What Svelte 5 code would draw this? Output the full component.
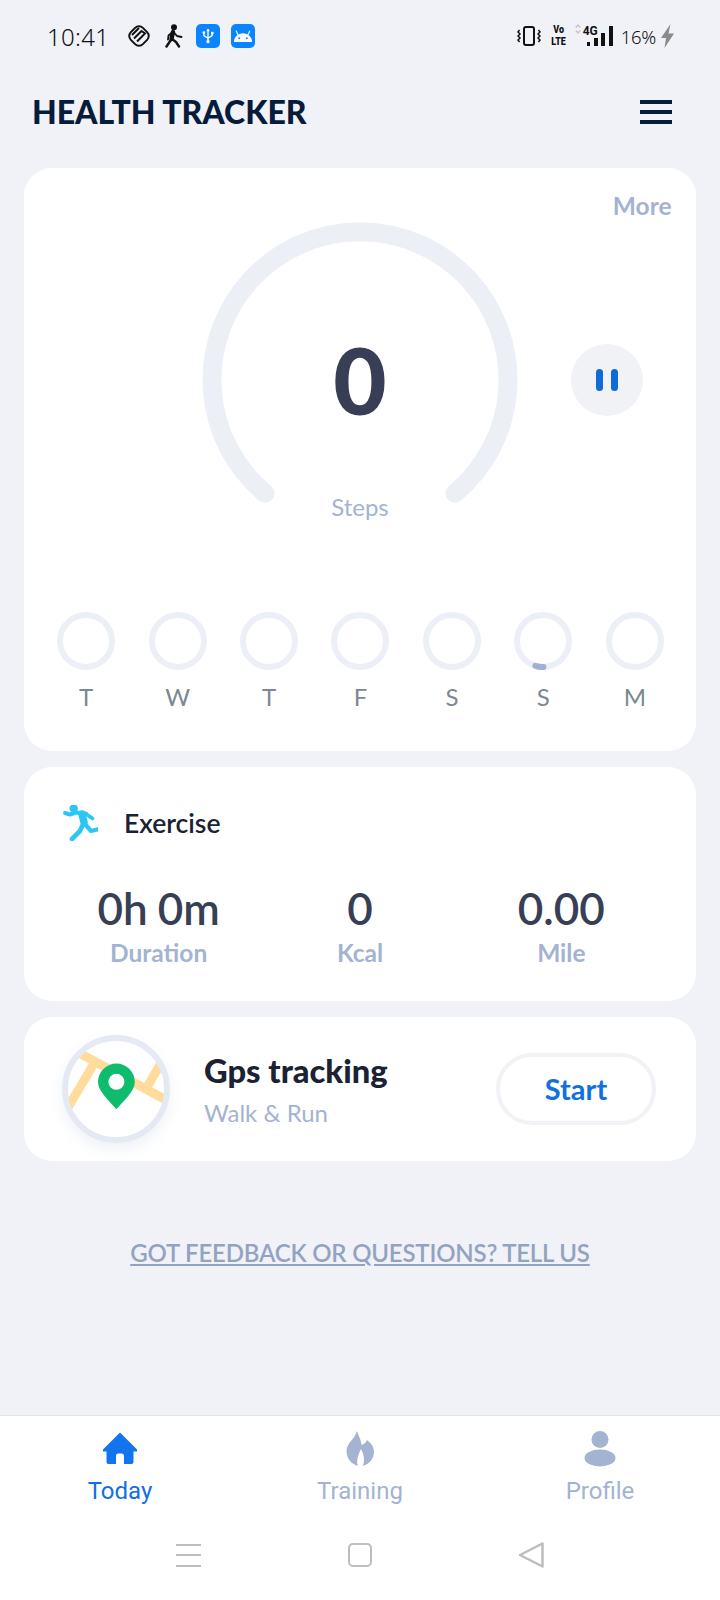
<script>
    const days = [
        {label: "T"},
        {label: "W"},
        {label: "T"},
        {label: "F"},
        {label: "S"},
        {label: "S", progress: true},
        {label: "M"}
    ];

    const stats = [
        {value: "0h 0m", label: "Duration"},
        {value: "0", label: "Kcal"},
        {value: "0.00", label: "Mile"}
    ];
</script>

<div class="page">
    <div class="status">
        <span class="time">10:41</span>
        <div class="status-left">
            <svg width="24" height="24" viewBox="0 0 24 24" fill="none" stroke="#111" stroke-width="2">
                <rect x="3.500" y="3.500" width="17" height="17" rx="5.500" transform="rotate(45 12 12)" />
                <path d="M5 11L12 4M7 14.500L15 6.500M10 17.500L14 13.500L18 9.500L14.500 7" />
            </svg>
            <svg class="walker" width="18" height="24" viewBox="0 0 18 24" fill="none" stroke="#111" stroke-linecap="round" stroke-linejoin="round">
                <circle cx="9" cy="3.200" r="3" fill="#111" stroke="none" />
                <path d="M8 8L6.500 15" stroke-width="4.400" />
                <path d="M6.500 15L1.500 22.500M7 15L11 18L14 22.500" stroke-width="2.400" />
                <path d="M9 8.500L12 12L16.500 13M6.500 9L3.500 11.500L3 15.500" stroke-width="1.800" />
            </svg>
            <div class="tile">
                <svg width="12" height="16" viewBox="0 0 16 20" fill="none" stroke="#fff" stroke-width="1.800">
                    <path d="M8 1V18M2.500 6.500V9.500L8 13L13.500 9.500V7" />
                    <path d="M8 0L10.500 3.500H5.500Z" fill="#fff" stroke="none" />
                    <circle cx="8" cy="17.500" r="2.200" fill="#fff" stroke="none" />
                    <circle cx="2.500" cy="5.500" r="1.900" fill="#fff" stroke="none" />
                    <rect x="12" y="4.500" width="3.400" height="3.400" fill="#fff" stroke="none" />
                </svg>
            </div>
            <div class="tile">
                <svg width="18" height="13" viewBox="0 0 20 14">
                    <path d="M0 13C0 7.500 4.500 3.500 10 3.500C15.500 3.500 20 7.500 20 13Z" fill="#fff" />
                    <path d="M4.500 5L2.500 1M15.500 5L17.500 1" stroke="#fff" stroke-width="1.300" stroke-linecap="round" />
                    <circle cx="5.800" cy="9" r="1.100" fill="#0a84ff" />
                    <circle cx="14.200" cy="9" r="1.100" fill="#0a84ff" />
                </svg>
            </div>
        </div>
        <div class="status-right">
            <svg width="24" height="20" viewBox="0 0 24 20" fill="none" stroke="#111">
                <rect x="7" y="1" width="10" height="18" rx="2" stroke-width="2" />
                <path d="M2.500 4L1 6L3 8L1 10L3 12L1 14L2.500 16M21.500 4L23 6L21 8L23 10L21 12L23 14L21.500 16" stroke-width="1.500" />
            </svg>
            <div class="volte"><span>Vo</span><span>LTE</span></div>
            <svg class="arrows" width="6" height="10" viewBox="0 0 6 10" fill="none" stroke="#c4c4c4" stroke-width="1.300">
                <path d="M0.800 3.500L3 1L5.200 3.500M0.800 6.500L3 9L5.200 6.500" />
            </svg>
            <div class="signal">
                <div class="net">
                    <span>4G</span>
                    <div class="small-bars"><i></i><i></i></div>
                </div>
                <i class="bar-mid"></i>
                <i class="bar-tall"></i>
            </div>
            <span class="battery">16%</span>
            <svg class="bolt" width="13" height="24" viewBox="0 0 13 24">
                <path d="M9.500 0L0 14H5L3.500 24L13 9.500H7.500Z" fill="#8a8a8a" />
            </svg>
        </div>
    </div>

    <header class="header">
        <h1>HEALTH TRACKER</h1>
        <div class="menu"><i></i><i></i><i></i></div>
    </header>

    <main class="main">
        <section class="card steps-card">
            <div class="more">More</div>
            <div class="gauge-row">
                <div class="gauge">
                    <svg width="316" height="300" viewBox="0 0 316 300" fill="none">
                        <path d="M63 271.300A148 148 0 1 1 253 271.300" stroke="#ecf0f6" stroke-width="19" stroke-linecap="round" />
                    </svg>
                    <div class="count">0</div>
                    <div class="steps-label">Steps</div>
                </div>
                <button class="pause" aria-label="Pause"><i></i><i></i></button>
            </div>
            <div class="week">
                {#each days as day}
                    <div class="day">
                        <svg width="58" height="58" viewBox="0 0 58 58" fill="none">
                            <circle cx="29" cy="29" r="26" stroke="#ecf0f6" stroke-width="6" />
                            {#if day.progress}
                                <path d="M21.400 53.900A26 26 0 0 0 29.400 55" stroke="#9fb0d0" stroke-width="6" stroke-linecap="round" />
                            {/if}
                        </svg>
                        <span>{day.label}</span>
                    </div>
                {/each}
            </div>
        </section>

        <section class="card exercise-card">
            <div class="exercise-head">
                <svg width="36" height="36" viewBox="11 15 36 36" fill="none" stroke="#2cc5f4" stroke-linecap="round" stroke-linejoin="round">
                    <circle cx="22.700" cy="18.500" r="4.200" fill="#2cc5f4" stroke="none" />
                    <path d="M14 23L19 24.500L25 22.500L35 23.500" stroke-width="4" />
                    <path d="M31 24L33 32" stroke-width="7.500" />
                    <path d="M33 32L29 41L21 49" stroke-width="4.600" />
                    <path d="M33 33L40 41L46 39.500" stroke-width="4.200" />
                    <path d="M35 24L41.500 28.500" stroke-width="3.800" />
                </svg>
                <span>Exercise</span>
            </div>
            <div class="stats">
                {#each stats as stat}
                    <div class="stat">
                        <div class="stat-value">{stat.value}</div>
                        <div class="stat-label">{stat.label}</div>
                    </div>
                {/each}
            </div>
        </section>

        <section class="card gps-card">
            <div class="map">
                <svg width="108" height="108" viewBox="0 0 108 108" fill="none">
                    <defs>
                        <clipPath id="mapClip"><circle cx="54" cy="54" r="49" /></clipPath>
                    </defs>
                    <g clip-path="url(#mapClip)" stroke="#ffdc9c" stroke-width="9">
                        <path d="M8 13L104 65" />
                        <path d="M33 27L5 74" />
                        <path d="M99 28L84 54" />
                    </g>
                    <circle cx="54" cy="54" r="51" stroke="#e4e9f3" stroke-width="6" />
                    <path d="M54.400 74.300C48 66 36 57 36 47A18.400 18.400 0 0 1 72.800 47C72.800 57 61 66 54.400 74.300Z" fill="#0fbb6c" />
                    <circle cx="54.400" cy="46.800" r="8" fill="#fff" />
                </svg>
            </div>
            <div class="gps-text">
                <div class="gps-title">Gps tracking</div>
                <div class="gps-sub">Walk &amp; Run</div>
            </div>
            <button class="start">Start</button>
        </section>

        <div class="feedback">GOT FEEDBACK OR QUESTIONS? TELL US</div>
    </main>

    <nav class="tabs">
        <div class="tab active">
            <svg width="36" height="36" viewBox="0 0 36 36">
                <path d="M18 1.500L35 18.500V20.500H31.500V31C31.500 32.200 30.700 33 29.500 33H22V25C22 23.500 21 22.500 19.800 22.500H16.200C15 22.500 14 23.500 14 25V33H6.500C5.300 33 4.500 32.200 4.500 31V20.500H1V18.500Z" fill="#1275ee" />
            </svg>
            <span>Today</span>
        </div>
        <div class="tab">
            <svg width="36" height="36" viewBox="0 0 36 36">
                <path d="M15 0C16.500 5 19 8 19.500 14C21 13.500 24 12 25 9C29 12 32 16 32 21C32 28 27 33 21 35C23 29 22 24 19 18C16 24 14 30 16 35C9 33 4.500 27 4.500 20C4.500 12 13 8 15 0Z" fill="#a3b3d1" />
            </svg>
            <span>Training</span>
        </div>
        <div class="tab">
            <svg width="36" height="36" viewBox="0 0 36 36" fill="#a3b3d1">
                <ellipse cx="18" cy="8.500" rx="8.500" ry="8.500" />
                <ellipse cx="18" cy="27" rx="15.500" ry="8.500" />
            </svg>
            <span>Profile</span>
        </div>
    </nav>

    <div class="system-nav">
        <div class="sys-menu"><i></i><i></i><i></i></div>
        <div class="sys-home"></div>
        <svg width="27" height="28" viewBox="0 0 27 28" fill="none">
            <path d="M24.500 2.500V25.500L2 14Z" stroke="#bdbdbd" stroke-width="2.500" stroke-linejoin="round" />
        </svg>
    </div>
</div>

<style>
    :global(body) {
        background: #f0f2f7;
    }

    .page {
        width: 720px;
        height: 1600px;
        display: flex;
        flex-direction: column;
        font-family: Lato, sans-serif;
        background: #f0f2f7;
        overflow: hidden;
    }

    .status {
        height: 72px;
        box-sizing: border-box;
        padding: 0 46px 0 47px;
        display: flex;
        align-items: center;
    }

    .time {
        font-family: "Noto Sans", sans-serif;
        font-weight: 300;
        font-size: 24px;
        letter-spacing: 0.3px;
        color: #111;
        width: 80px;
    }

    .status-left {
        display: flex;
        align-items: center;
        margin-right: auto;
    }

    .walker {
        margin-left: 14px;
        margin-right: 13px;
    }

    .tile {
        width: 24px;
        height: 24px;
        border-radius: 5px;
        background: #0a84ff;
        display: flex;
        align-items: center;
        justify-content: center;
        margin-right: 11px;
    }

    .status-right {
        display: flex;
        align-items: center;
    }

    .volte {
        display: flex;
        flex-direction: column;
        align-items: center;
        font-family: Roboto, sans-serif;
        font-weight: 900;
        font-size: 10.500px;
        line-height: 12.400px;
        color: #111;
        margin-left: 9px;
        transform: scaleX(0.85);
    }

    .volte span {
        display: block;
    }

    .arrows {
        margin-left: 8px;
        margin-top: -14px;
    }

    .signal {
        display: flex;
        align-items: flex-end;
        margin-left: 2px;
        height: 20px;
    }

    .net {
        display: flex;
        flex-direction: column;
        align-items: center;
    }

    .net span {
        font-family: Roboto, sans-serif;
        font-weight: 700;
        font-size: 12px;
        line-height: 11px;
        color: #111;
    }

    .small-bars {
        display: flex;
        gap: 4px;
        align-items: flex-end;
        margin-left: 4px;
        height: 9px;
    }

    .small-bars i {
        display: block;
        width: 3.500px;
        height: 4px;
        background: #111;
    }

    .small-bars i + i {
        height: 8px;
    }

    .bar-mid,
    .bar-tall {
        display: block;
        width: 4px;
        background: #111;
        margin-left: 3px;
    }

    .bar-mid {
        height: 13px;
    }

    .bar-tall {
        height: 20px;
        margin-left: 4px;
    }

    .battery {
        font-family: "Noto Sans", sans-serif;
        font-weight: 300;
        font-size: 18.500px;
        letter-spacing: -0.300px;
        color: #111;
        margin-left: 8px;
    }

    .bolt {
        margin-left: 5px;
    }

    .header {
        display: flex;
        align-items: center;
        justify-content: space-between;
        padding: 0 48px 16px 32px;
        height: 96px;
        box-sizing: border-box;
    }

    h1 {
        margin: 0;
        font-size: 32px;
        line-height: 40px;
        font-weight: 900;
        color: #051d3a;
    }

    .menu {
        width: 32px;
        display: flex;
        flex-direction: column;
        gap: 6px;
    }

    .menu i {
        display: block;
        height: 4px;
        background: #051d3a;
    }

    .main {
        flex: 1;
        padding: 0 24px;
        display: flex;
        flex-direction: column;
        gap: 16px;
    }

    .card {
        background: #fff;
        border-radius: 28px;
    }

    .steps-card {
        padding: 23px 16px 39px;
    }

    .more {
        text-align: right;
        font-size: 24.500px;
        line-height: 30px;
        font-weight: 700;
        color: #a3b3d1;
        padding-right: 8.500px;
    }

    .gauge-row {
        display: grid;
        grid-template-columns: 1fr 316px 1fr;
        align-items: start;
        margin-top: 1px;
    }

    .gauge {
        grid-column: 2;
        position: relative;
        height: 300px;
    }

    .gauge svg {
        display: block;
    }

    .count {
        position: absolute;
        left: 0;
        right: 0;
        top: 100px;
        text-align: center;
        font-size: 92px;
        line-height: 116px;
        font-weight: 900;
        color: #373e55;
    }

    .steps-label {
        position: absolute;
        left: 0;
        right: 0;
        top: 270px;
        text-align: center;
        font-size: 24px;
        line-height: 30px;
        color: #a3b3d1;
    }

    .pause {
        grid-column: 3;
        justify-self: center;
        margin-top: 122px;
        margin-left: 16px;
        width: 72px;
        height: 72px;
        border: none;
        border-radius: 50%;
        background: #f0f2f6;
        display: flex;
        align-items: center;
        justify-content: center;
        gap: 8px;
        padding: 0;
    }

    .pause i {
        display: block;
        width: 7px;
        height: 22px;
        border-radius: 3.500px;
        background: #0f6bd8;
    }

    .week {
        display: grid;
        grid-template-columns: repeat(7, 1fr);
        margin-top: 90px;
        margin-left: 0.500px;
        margin-right: -0.500px;
    }

    .day {
        display: flex;
        flex-direction: column;
        align-items: center;
        gap: 12px;
        font-size: 24px;
        line-height: 30px;
        color: #7b8794;
    }

    .day svg {
        display: block;
    }

    .exercise-card {
        padding: 38px 34px 33px;
    }

    .exercise-head {
        display: flex;
        align-items: center;
        gap: 26px;
        margin-left: 4px;
        font-size: 26.500px;
        line-height: 30px;
        font-weight: 600;
        color: #1a2233;
    }

    .exercise-head svg {
        display: block;
    }

    .stats {
        display: grid;
        grid-template-columns: repeat(3, 1fr);
        margin-top: 42px;
        text-align: center;
    }

    .stat-value {
        font-size: 44px;
        line-height: 50px;
        font-weight: 600;
        word-spacing: -1px;
        color: #373e55;
    }

    .stat-label {
        margin-top: 5px;
        font-size: 24.500px;
        line-height: 30px;
        font-weight: 700;
        color: #a3b3d1;
    }

    .gps-card {
        height: 144px;
        box-sizing: border-box;
        padding: 0 40px 0 38px;
        display: flex;
        align-items: center;
    }

    .map {
        width: 108px;
        height: 108px;
        border-radius: 50%;
        box-shadow: 0 6px 14px rgba(160, 175, 210, 0.18);
    }

    .map svg {
        display: block;
    }

    .gps-text {
        margin-left: 34px;
        flex: 1;
    }

    .gps-title {
        font-size: 32.700px;
        line-height: 40px;
        font-weight: 900;
        color: #1a2233;
    }

    .gps-sub {
        margin-top: 7px;
        font-size: 24px;
        line-height: 30px;
        color: #a3b3d1;
    }

    .start {
        width: 160px;
        height: 72px;
        box-sizing: border-box;
        border: 4px solid #f0f2f6;
        border-radius: 36px;
        background: #fff;
        font-family: Lato, sans-serif;
        font-size: 29px;
        font-weight: 700;
        color: #1170e0;
        padding: 0 0 2px;
    }

    .feedback {
        margin-top: 61px;
        text-align: center;
        font-size: 24px;
        line-height: 30px;
        font-weight: 600;
        letter-spacing: -0.200px;
        color: #92a3c1;
        text-decoration: underline;
    }

    .tabs {
        display: grid;
        grid-template-columns: repeat(3, 1fr);
        background: #fff;
        border-top: 1px solid #e1e4ec;
        padding-top: 15px;
    }

    .tab {
        display: flex;
        flex-direction: column;
        align-items: center;
        gap: 9px;
        font-family: Roboto, sans-serif;
        font-size: 24px;
        line-height: 30px;
        color: #a3b3d1;
    }

    .tab svg {
        display: block;
    }

    .tab.active {
        color: #1170e0;
    }

    .system-nav {
        height: 94px;
        background: #fff;
        display: grid;
        grid-template-columns: repeat(3, 1fr);
        align-items: center;
        justify-items: center;
        padding: 4px 103px 0;
        box-sizing: border-box;
    }

    .sys-menu {
        width: 25px;
        display: flex;
        flex-direction: column;
        gap: 8.500px;
    }

    .sys-menu i {
        display: block;
        height: 2px;
        background: #bdbdbd;
    }

    .sys-home {
        width: 24px;
        height: 24px;
        box-sizing: border-box;
        border: 2.500px solid #bdbdbd;
        border-radius: 5px;
    }
</style>
